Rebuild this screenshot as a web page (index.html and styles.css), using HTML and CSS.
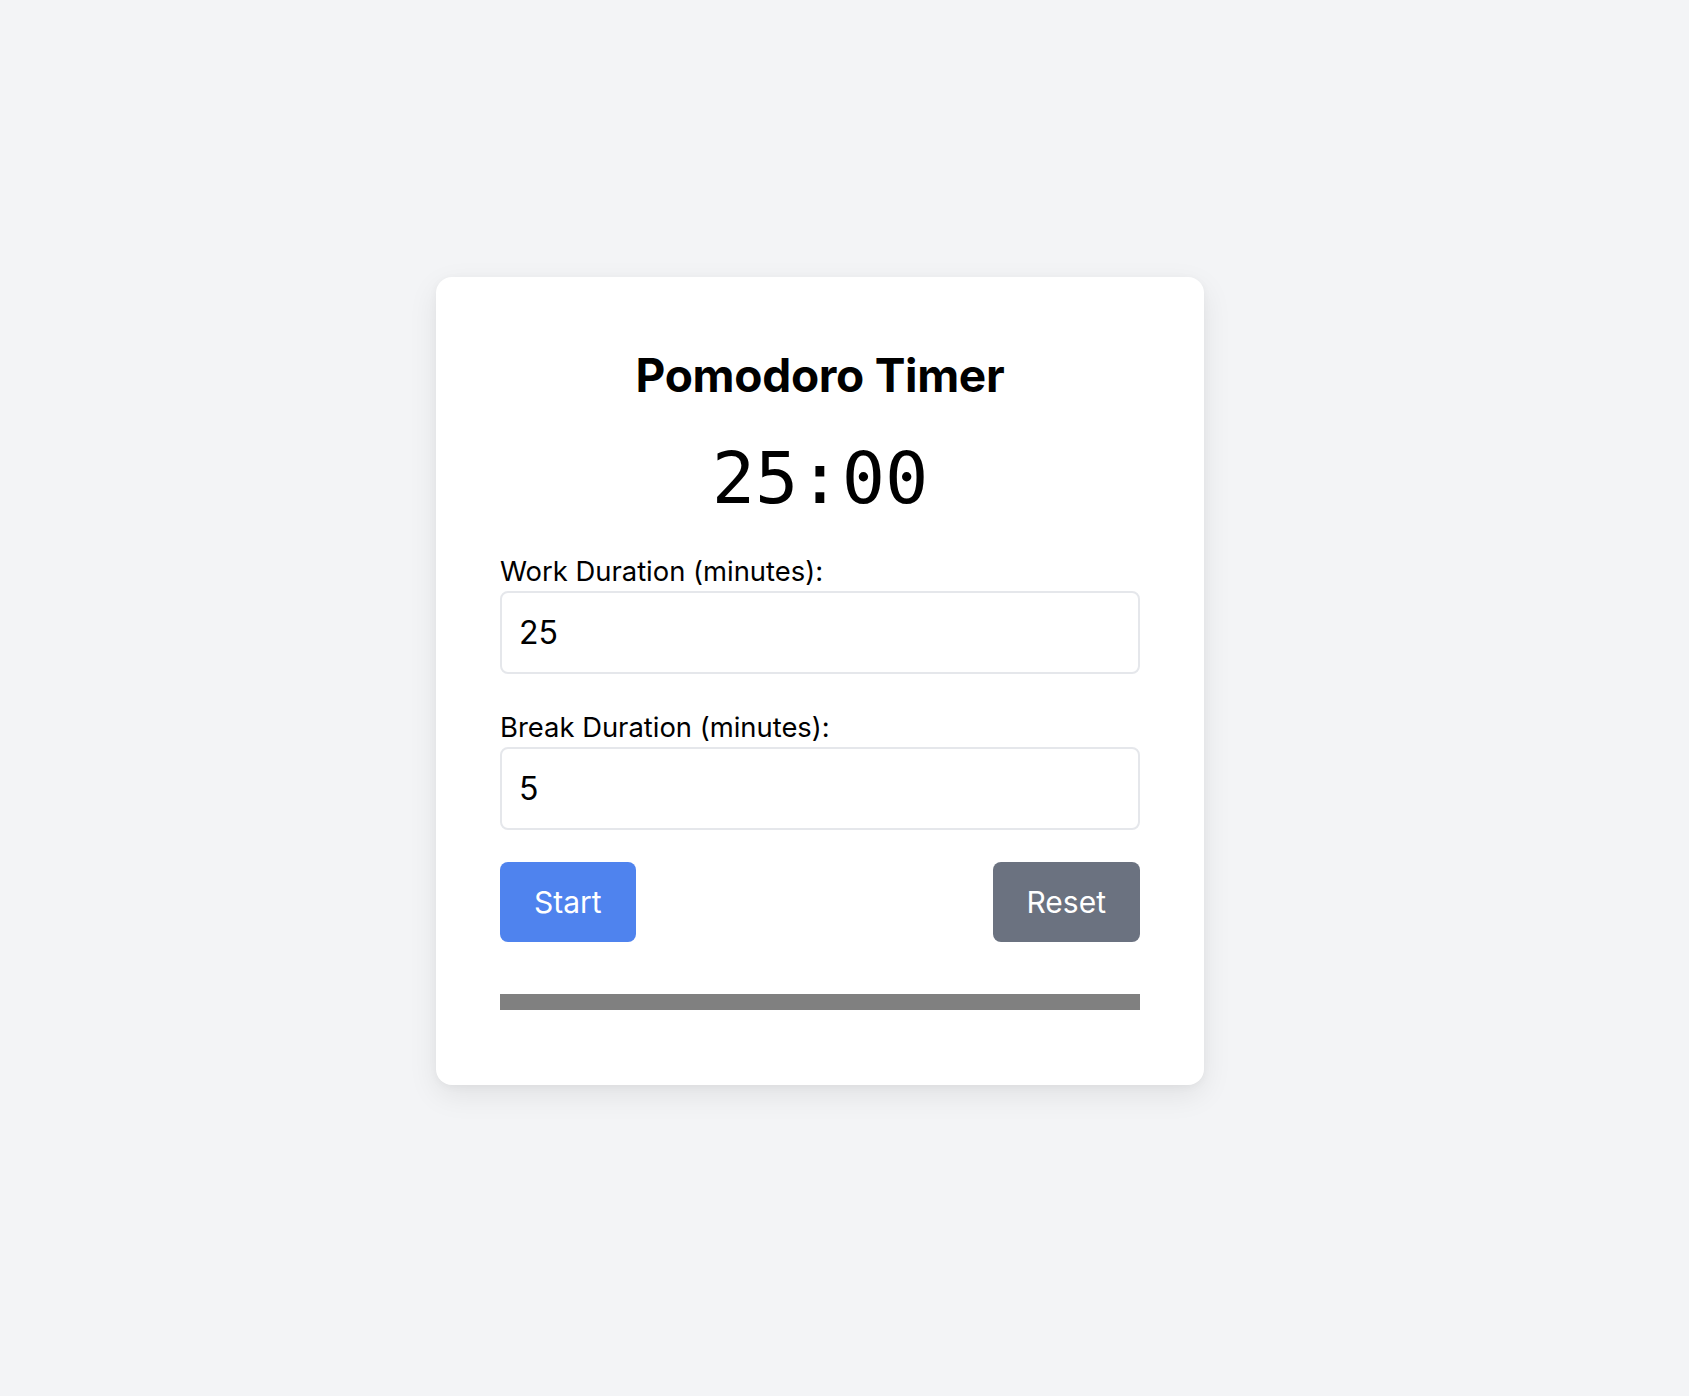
FILE: index.html
```html
<!DOCTYPE html>
<html lang="en">
<head>
<meta charset="utf-8">
<title>Pomodoro Timer</title>
<link rel="stylesheet" href="styles.css">
</head>
<body>
  <main class="card">
    <h1 class="title">Pomodoro Timer</h1>
    <div class="timer">25:00</div>
    <div class="field">
      <label class="label" for="work">Work Duration (minutes):</label>
      <input class="input" id="work" type="number" value="25">
    </div>
    <div class="field field-second">
      <label class="label" for="break">Break Duration (minutes):</label>
      <input class="input" id="break" type="number" value="5">
    </div>
    <div class="actions">
      <button class="btn btn-start">Start</button>
      <button class="btn btn-reset">Reset</button>
    </div>
    <div class="progress"><div class="progress-fill"></div></div>
  </main>
</body>
</html>
```

FILE: styles.css
```css
* { box-sizing: border-box; }

html, body { margin: 0; }

body {
  min-height: 100vh;
  background: #f3f4f6;
  font-family: Inter, "Noto Sans", sans-serif;
  color: #000;
  display: flex;
  align-items: center;
  justify-content: center;
  padding: 0 49px 34px 0;
}

.card {
  width: 768px;
  background: #fff;
  border-radius: 16px;
  box-shadow: 0 10px 30px rgba(0, 0, 0, 0.08), 0 2px 8px rgba(0, 0, 0, 0.04);
  padding: 70px 64px 75px;
  display: flex;
  flex-direction: column;
}

.title {
  margin: 0;
  font-size: 46px;
  line-height: 56px;
  font-weight: 700;
  text-align: center;
  letter-spacing: -0.3px;
}

.timer {
  margin-top: 32px;
  font-family: "DejaVu Sans Mono", "Liberation Mono", monospace;
  font-size: 72px;
  line-height: 86px;
  text-align: center;
}

.field {
  margin-top: 34px;
  display: flex;
  flex-direction: column;
  gap: 4px;
}

.field-second { margin-top: 37px; }

.label {
  font-size: 27.4px;
  line-height: 32px;
}

.input {
  height: 83px;
  width: 100%;
  border: 2px solid #e5e7eb;
  border-radius: 8px;
  padding: 0 17px;
  font-family: Inter, "Noto Sans", sans-serif;
  font-size: 32px;
  color: #000;
  background: #fff;
  outline: none;
  -moz-appearance: textfield;
}

.input::-webkit-outer-spin-button,
.input::-webkit-inner-spin-button {
  -webkit-appearance: none;
  margin: 0;
}

.actions {
  margin-top: 32px;
  display: flex;
  justify-content: space-between;
}

.btn {
  height: 80px;
  padding: 0 32px;
  border: none;
  border-radius: 8px;
  font-family: Inter, "Noto Sans", sans-serif;
  font-size: 30px;
  color: #fff;
  cursor: pointer;
}

.btn-start { background: #4f83ee; padding: 0 34px; }
.btn-reset { background: #6b7280; padding: 0 34px; }

.progress {
  margin-top: 52px;
  height: 16px;
  background: #808080;
}

.progress-fill {
  height: 100%;
  width: 0;
  background: #4f83ee;
}
```
